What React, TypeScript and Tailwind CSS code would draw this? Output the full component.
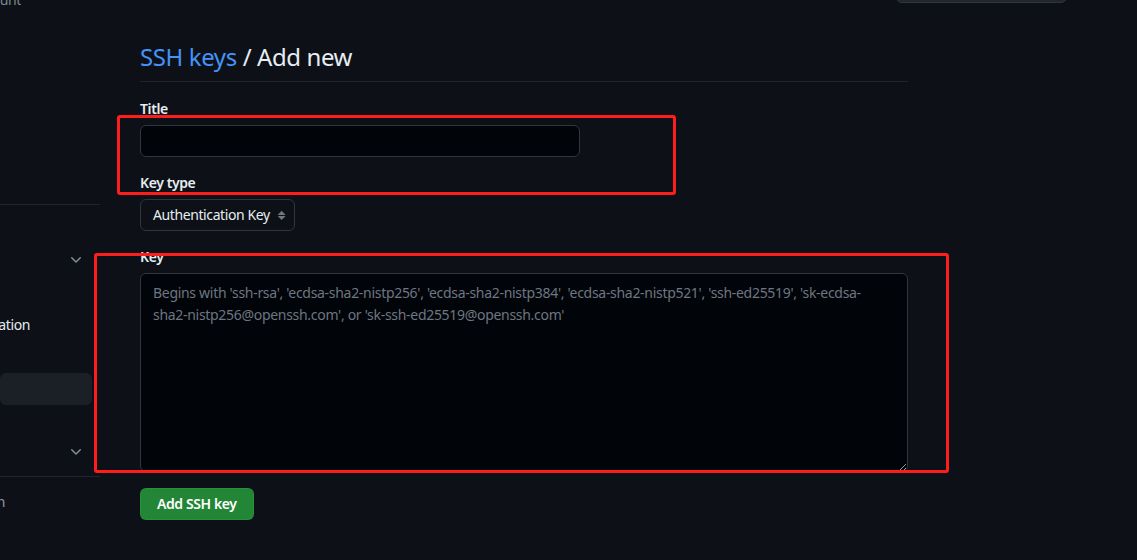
import React from 'react';

const placeholder =
  "Begins with 'ssh-rsa', 'ecdsa-sha2-nistp256', 'ecdsa-sha2-nistp384', 'ecdsa-sha2-nistp521', 'ssh-ed25519', 'sk-ecdsa-sha2-nistp256@openssh.com', or 'sk-ssh-ed25519@openssh.com'";

function Chevron() {
  return (
    <svg width="16" height="16" viewBox="0 0 16 16" fill="#848d97" aria-hidden>
      <path d="M12.78 5.22a.749.749 0 0 1 0 1.06l-4.25 4.25a.749.749 0 0 1-1.06 0L3.22 6.28a.749.749 0 1 1 1.06-1.06L8 8.939l3.72-3.719a.749.749 0 0 1 1.06 0Z" />
    </svg>
  );
}

function Sidebar() {
  return (
    <aside className="flex w-[100px] shrink-0 flex-col text-sm">
      {/* cropped profile subtitle */}
      <div className="-mt-[10px] flex h-[20px] w-[21px] justify-end overflow-hidden whitespace-nowrap leading-[20px] text-[#7d8590]">
        Your personal account
      </div>
      <div className="mt-[194px] h-px w-full bg-[#21262d]" />
      <div className="mt-[39px] flex h-[32px] items-center justify-end pr-[16px]">
        <Chevron />
      </div>
      <div className="mt-[33px] flex h-[32px] w-[30px] items-center justify-end overflow-hidden whitespace-nowrap text-[#e6edf3]">
        Password and authentication
      </div>
      <div className="mt-[32px] h-[32px] w-[92px] rounded-md bg-[#1b1f26]" />
      <div className="mt-[31px] flex h-[32px] items-center justify-end pr-[16px]">
        <Chevron />
      </div>
      <div className="mt-[8px] h-px w-full bg-[#21262d]" />
      <div className="mt-[9px] flex h-[32px] w-[5px] items-center justify-end overflow-hidden whitespace-nowrap text-[#9198a1]">
        Code, planning, and automation
      </div>
    </aside>
  );
}

export default function App() {
  return (
    <div className="relative h-[560px] w-[1137px] overflow-hidden bg-[#0d1117] font-['Noto_Sans',sans-serif] tracking-[-0.4px] text-[#e6edf3]">
      {/* cropped header button at top right */}
      <div className="absolute left-[896px] top-[-30px] h-[33px] w-[171px] rounded-md border border-[#30363d] bg-[#21262d]" />

      <div className="flex">
        <Sidebar />
        <main className="ml-[40px] flex w-[768px] flex-col">
          <h2 className="mt-[39px] border-b border-[#21262d] pb-[6px] text-2xl font-normal leading-[36px] tracking-[-0.4px]">
            <a className="text-[#4493f8]">SSH keys</a> / Add new
          </h2>

          <label className="mt-[17px] text-sm font-semibold leading-[20px]">Title</label>
          <input className="mt-[6px] h-[32px] w-[440px] rounded-md border border-[#30363d] bg-[#010409] px-3 text-sm outline-none" />

          <label className="mt-[16px] text-sm font-semibold leading-[20px]">Key type</label>
          <div className="mt-[6px]">
            <button className="flex h-[32px] items-center gap-[4px] rounded-md border border-[#30363d] bg-[#0d1117] pl-[12px] pr-[4px] text-sm tracking-[-0.4px] text-[#e6edf3]">
              Authentication Key
              <svg width="16" height="16" viewBox="0 0 16 16" fill="#6e7681" aria-hidden>
                <path d="m4.074 9.427 3.396 3.396a.25.25 0 0 0 .354 0l3.396-3.396A.25.25 0 0 0 11.043 9H4.251a.25.25 0 0 0-.177.427Zm0-1.957L7.47 4.073a.25.25 0 0 1 .354 0L11.22 7.47a.25.25 0 0 1-.177.426H4.251a.25.25 0 0 1-.177-.426Z" />
              </svg>
            </button>
          </div>

          <label className="mt-[16px] text-sm font-semibold leading-[20px]">Key</label>
          <textarea
            placeholder={placeholder}
            className="mt-[6px] h-[199px] w-[768px] rounded-md border border-[#30363d] bg-[#010409] px-3 py-2 text-sm leading-[22px] tracking-[-0.3px] text-[#e6edf3] outline-none placeholder:text-[#6e7681]"
          />

          <div className="mt-[16px]">
            <button className="h-[32px] rounded-md border border-[#2ea04366] bg-[#238636] px-4 text-sm font-semibold tracking-[-0.4px] text-white">
              Add SSH key
            </button>
          </div>
        </main>
      </div>

      {/* red annotation boxes */}
      <div className="absolute left-[117px] top-[115px] h-[80px] w-[559px] rounded-[3px] border-[3px] border-[#ff1c1c]" />
      <div className="absolute left-[94px] top-[253px] h-[220px] w-[855px] rounded-[3px] border-[3px] border-[#ff1c1c]" />
    </div>
  );
}
